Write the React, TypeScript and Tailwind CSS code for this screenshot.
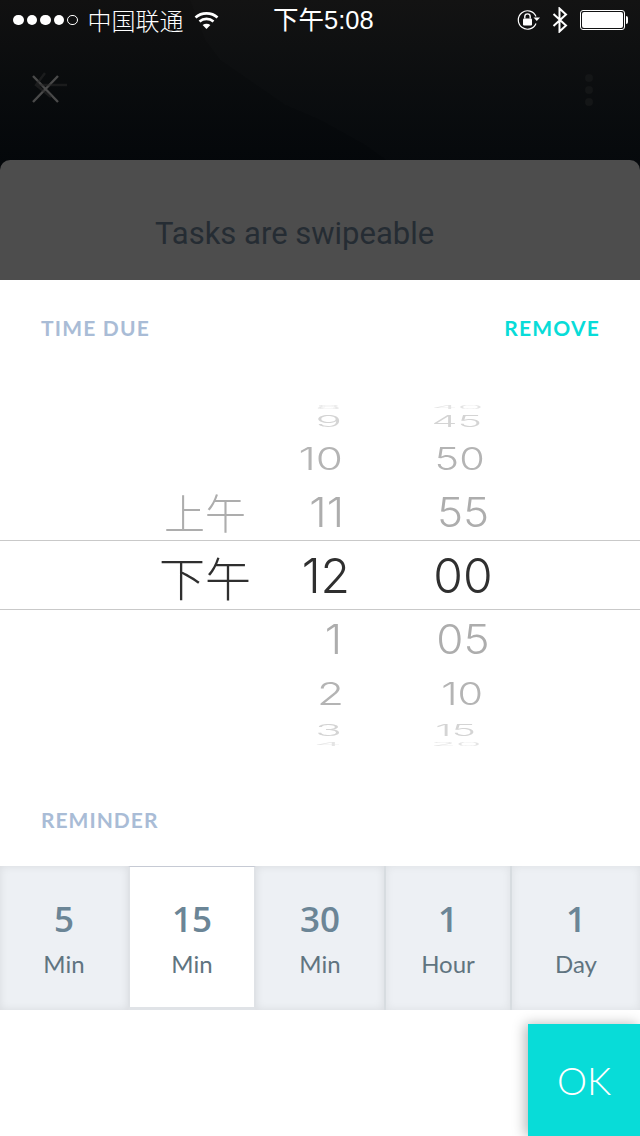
import React from "react";

type WheelRow = { label: string; row: string; text: string };

// Row heights and squash values follow the cylinder projection of an iOS picker.
const hourRows: WheelRow[] = [
  { label: "8", row: "h-[4px] overflow-hidden justify-end pr-[8px]", text: "scale-y-[0.1] text-[#e4e4e4]" },
  { label: "9", row: "h-[24px] justify-end pr-[8px]", text: "scale-y-[0.36] text-[#d4d4d4]" },
  { label: "10", row: "h-[50px] justify-end pr-[7px]", text: "scale-y-[0.72] text-[#b4b4b4]" },
  { label: "11", row: "h-[58px] justify-end pr-[6px]", text: "scale-y-[0.92] text-[#adadad]" },
  { label: "12", row: "h-[69px] justify-end", text: "text-[48px] text-[#2f2f2f]" },
  { label: "1", row: "h-[58px] justify-end pr-[8px]", text: "scale-y-[0.92] text-[#adadad]" },
  { label: "2", row: "h-[50px] justify-end pr-[6px]", text: "scale-y-[0.72] text-[#b4b4b4]" },
  { label: "3", row: "h-[24px] justify-end pr-[8px]", text: "scale-y-[0.36] text-[#d4d4d4]" },
  { label: "4", row: "h-[4px] overflow-hidden justify-end pr-[8px]", text: "scale-y-[0.1] text-[#e4e4e4]" },
];

const minuteRows: WheelRow[] = [
  { label: "40", row: "h-[4px] overflow-hidden justify-center pr-[12px]", text: "scale-y-[0.1] scale-x-[0.94] text-[#e4e4e4]" },
  { label: "45", row: "h-[24px] justify-center pr-[12px]", text: "scale-y-[0.36] scale-x-[0.94] text-[#d4d4d4]" },
  { label: "50", row: "h-[50px] justify-center pr-[6px]", text: "scale-y-[0.72] scale-x-[0.94] text-[#b4b4b4]" },
  { label: "55", row: "h-[58px] justify-center", text: "scale-y-[0.92] text-[#adadad]" },
  { label: "00", row: "h-[69px] justify-center", text: "text-[48px] text-[#2f2f2f]" },
  { label: "05", row: "h-[58px] justify-center", text: "scale-y-[0.92] text-[#adadad]" },
  { label: "10", row: "h-[50px] justify-center pr-[2px]", text: "scale-y-[0.72] scale-x-[0.94] text-[#b4b4b4]" },
  { label: "15", row: "h-[24px] justify-center pr-[14px]", text: "scale-y-[0.36] scale-x-[0.94] text-[#d4d4d4]" },
  { label: "20", row: "h-[4px] overflow-hidden justify-center pr-[14px]", text: "scale-y-[0.1] scale-x-[0.94] text-[#e4e4e4]" },
];

const reminders = [
  { value: "5", unit: "Min", width: "w-[128px]" },
  { value: "15", unit: "Min", width: "w-[128px]", active: true },
  { value: "30", unit: "Min", width: "w-[128px]" },
  { value: "1", unit: "Hour", width: "w-[126px]", divided: true },
  { value: "1", unit: "Day", width: "w-[130px]", divided: true },
];

function Wheel({ rows, className }: { rows: WheelRow[]; className: string }) {
  return (
    <div className={`flex flex-col [will-change:transform] ${className}`}>
      {rows.map((r) => (
        <div key={r.label} className={`flex items-center ${r.row}`}>
          <span className={`block text-[44px] leading-none font-[350] font-['Inter',sans-serif] ${r.text}`}>
            {r.label}
          </span>
        </div>
      ))}
    </div>
  );
}

function StatusBar() {
  return (
    <div className="relative flex h-[40px] items-center text-white">
      <div className="ml-[13px] flex items-center gap-[3px]">
        {[0, 1, 2, 3].map((i) => (
          <span key={i} className="h-[10.5px] w-[10.5px] rounded-full bg-white" />
        ))}
        <span className="h-[10.5px] w-[10.5px] rounded-full border border-white" />
      </div>
      <span className="ml-[10px] text-[24px] leading-none font-['Noto_Sans_CJK_SC',sans-serif] font-light">中国联通</span>
      <svg className="ml-[10px]" width="25" height="19" viewBox="0 0 25 19" fill="none" stroke="white" strokeWidth="2.6">
        <path d="M1.5 6.5C7.5 1 17.5 1 23.5 6.5" />
        <path d="M5.5 10.5C9.5 7 15.5 7 19.5 10.5" />
        <path d="M12.5 18L8.6 14C11 12.2 14 12.2 16.4 14Z" fill="white" stroke="none" />
      </svg>
      <span className="absolute left-[273px] top-[4px] text-[25.5px] leading-[32px] font-['Liberation_Sans','Noto_Sans_CJK_SC',sans-serif]">
        下午5:08
      </span>
      <div className="ml-auto mr-[12px] flex items-center">
        <svg width="24" height="22" viewBox="0 0 24 22" fill="none">
          <path d="M19 14.5A9.2 9.2 0 1 1 19 7.5" stroke="white" strokeWidth="1.2" />
          <path d="M16.5 8.5H23L19.8 12Z" fill="white" />
          <rect x="6" y="9.5" width="9" height="7" rx="1" fill="white" />
          <path d="M7.8 9.5V7.6a2.7 2.7 0 0 1 5.4 0V9.5" stroke="white" strokeWidth="1.4" />
        </svg>
        <svg className="ml-[11px]" width="16" height="26" viewBox="0 0 16 26" fill="none" stroke="white" strokeWidth="2">
          <path d="M1.5 7L14 18.5L7.5 24.5V1.5L14 7.5L1.5 19" />
        </svg>
        <div className="ml-[12px] flex items-center">
          <div className="h-[20px] w-[45px] rounded-[3px] border border-white p-[1px]">
            <div className="h-full w-full rounded-[2px] bg-white" />
          </div>
          <div className="ml-[1px] h-[8px] w-[2px] rounded-r-full bg-white" />
        </div>
      </div>
    </div>
  );
}

export default function App() {
  return (
    <div className="flex h-[1136px] w-[640px] flex-col overflow-hidden bg-white font-['Lato',sans-serif]">
      <div className="relative h-[170px] shrink-0 bg-gradient-to-b from-[#111111] to-[#04070a]">
        {/* faint ridge behind the header */}
        <svg className="absolute inset-0" width="640" height="170" viewBox="0 0 640 170">
          <path d="M205 40L220 60L285 105L320 120L365 145L400 170H640V0H190Z" fill="#ffffff" fillOpacity="0.012" />
        </svg>
        <div className="relative">
          <StatusBar />
          <div className="flex h-[100px] items-center justify-between pl-[29px] pr-[47px]">
            <svg width="40" height="40" viewBox="0 0 40 40" fill="none">
              <path d="M4 4L29 30M29 4L4 30" stroke="#4a4a4a" strokeWidth="2.4" transform="translate(0 2)" />
              <path d="M16 3L7 15L22 27M7 15H38" stroke="#2a2a2a" strokeWidth="2.4" opacity="0.55" />
            </svg>
            <div className="flex flex-col gap-[4px]">
              <span className="h-[8px] w-[8px] rounded-full bg-[#141617]" />
              <span className="h-[8px] w-[8px] rounded-full bg-[#141617]" />
              <span className="h-[8px] w-[8px] rounded-full bg-[#141617]" />
            </div>
          </div>
        </div>
      </div>

      <div className="-mt-[10px] relative h-[120px] shrink-0 rounded-t-[10px] bg-[#4d4d4d] pt-[55px] pl-[155px] font-['Roboto',sans-serif] text-[31px] leading-[38px] text-[#252c33]">
        Tasks are swipeable
      </div>

      <div className="relative flex flex-1 flex-col bg-white">
        <div className="flex items-center justify-between pl-[41px] pr-[40px] pt-[35px] text-[21px] leading-[26px] font-bold tracking-[1.2px]">
          <span className="text-[#a9bcd6]">TIME DUE</span>
          <span className="text-[#08dcd8]">REMOVE</span>
        </div>

        {/* Time wheel */}
        <div className="relative mt-[64px] flex h-[340px] shrink-0 items-start">
          <div className="absolute inset-x-0 top-[135px] h-[70px] border-y border-[#c9c9c9]" />
          <div className="ml-[140px] flex w-[130px] flex-col items-center pt-[77px] font-['Noto_Sans_CJK_SC',sans-serif] [will-change:transform]">
            <div className="flex h-[58px] items-center text-[41px] leading-none font-light text-[#adadad]">上午</div>
            <div className="mt-[1px] flex h-[69px] items-center text-[46px] leading-none font-light text-[#2f2f2f]">下午</div>
          </div>
          <Wheel rows={hourRows} className="w-[80px]" />
          <Wheel rows={minuteRows} className="ml-[58px] w-[110px]" />
        </div>

        <div className="pl-[41px] pt-[62px] text-[21px] leading-[26px] font-bold tracking-[1px] text-[#a9bcd6]">
          REMINDER
        </div>

        {/* Reminder lead-time options */}
        <div className="mt-[33px] flex h-[144px] shrink-0">
          {reminders.map((r) => (
            <div
              key={r.value + r.unit}
              className={
                r.active
                  ? `flex ${r.width} flex-col items-center border-x-2 border-t border-b-[3px] border-x-[#dfe2e6] border-t-[#c6cad4] border-b-[#e0e3e7] bg-white pt-[30px]`
                  : r.divided
                    ? `flex ${r.width} flex-col items-center border-l-2 border-[#d7dce0] bg-[#edf0f4] pt-[31px] shadow-[inset_0_0_8px_rgba(0,0,0,0.07)]`
                    : `flex ${r.width} flex-col items-center bg-[#edf0f4] pt-[31px] shadow-[inset_0_0_8px_rgba(0,0,0,0.09)]`
              }
            >
              <span className="font-['Open_Sans',sans-serif] text-[35px] leading-[44px] font-semibold text-[#6b8596]">
                {r.value}
              </span>
              <span className="mt-[7px] text-[24px] leading-[32px] text-[#607480]">{r.unit}</span>
            </div>
          ))}
        </div>

        <div className="absolute right-0 bottom-0 flex h-[112px] w-[112px] items-center justify-center bg-[#08dcd8] text-[38px] font-light text-white shadow-[-3px_0_12px_rgba(0,0,0,0.28)]">
          OK
        </div>
      </div>
    </div>
  );
}
